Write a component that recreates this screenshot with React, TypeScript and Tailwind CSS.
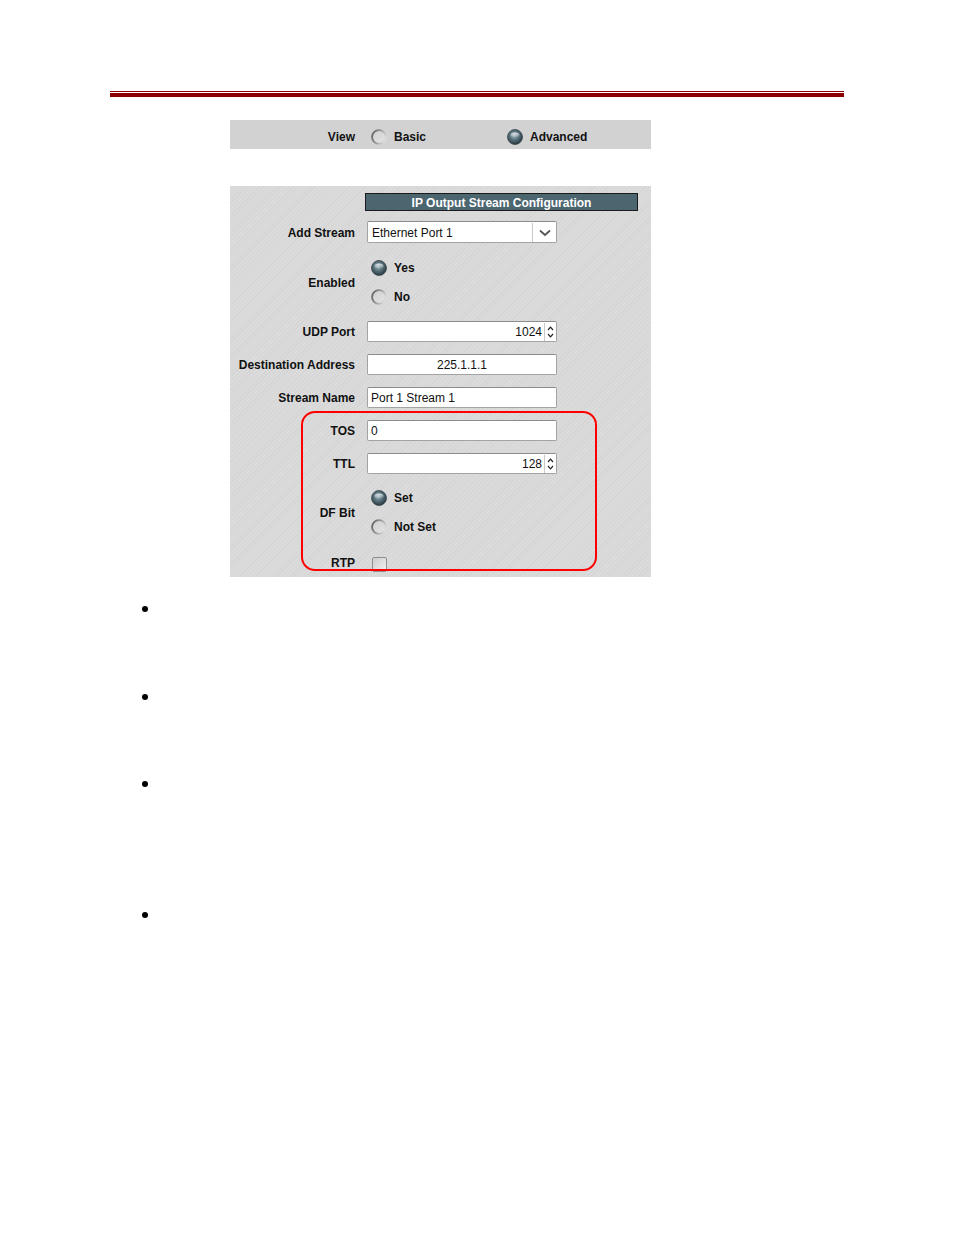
import React from "react";

const font = { fontFamily: '"Liberation Sans", Arial, sans-serif' };

function Radio({ on }: { on: boolean }) {
  if (on) {
    return (
      <svg width="16" height="16" viewBox="0 0 16 16" className="shrink-0">
        <defs>
          <radialGradient id="rOn" cx="45%" cy="40%" r="60%">
            <stop offset="0%" stopColor="#a9bcc3" />
            <stop offset="45%" stopColor="#5d7680" />
            <stop offset="100%" stopColor="#27373d" />
          </radialGradient>
          <linearGradient id="rOnHi" x1="0" y1="0" x2="0" y2="1">
            <stop offset="0%" stopColor="#ffffff" stopOpacity="0.75" />
            <stop offset="100%" stopColor="#ffffff" stopOpacity="0" />
          </linearGradient>
        </defs>
        <circle cx="8" cy="8" r="7.5" fill="url(#rOn)" stroke="#3a4a50" strokeWidth="0.8" />
        <ellipse cx="8" cy="6" rx="4.5" ry="2.6" fill="url(#rOnHi)" />
      </svg>
    );
  }
  return (
    <svg width="16" height="16" viewBox="0 0 16 16" className="shrink-0">
      <defs>
        <linearGradient id="rOffS" x1="0" y1="0.2" x2="1" y2="0.6">
          <stop offset="0%" stopColor="#5e5e5e" />
          <stop offset="50%" stopColor="#9a9a9a" />
          <stop offset="100%" stopColor="#dcdcdc" />
        </linearGradient>
        <linearGradient id="rOffF" x1="0" y1="0" x2="1" y2="1">
          <stop offset="0%" stopColor="#cfcfcf" />
          <stop offset="100%" stopColor="#e4e4e4" />
        </linearGradient>
      </defs>
      <circle cx="8" cy="8" r="6.9" fill="url(#rOffF)" stroke="url(#rOffS)" strokeWidth="1.8" />
    </svg>
  );
}

function Row({
  label,
  h,
  mt,
  children,
}: {
  label: string;
  h: number;
  mt: number;
  children: React.ReactNode;
}) {
  return (
    <div className="flex items-center" style={{ height: h, marginTop: mt }}>
      <div className="w-[125px] pt-[1px] text-right text-[12px] font-bold text-[#111]">{label}</div>
      <div className="ml-[12px] flex h-full items-center">{children}</div>
    </div>
  );
}

function Spinner() {
  return (
    <div className="flex h-full w-[12px] flex-col items-center justify-center border-l border-[#c8c8c8]">
      <svg width="7" height="5" viewBox="0 0 7 5">
        <path d="M1 4 L3.5 1.2 L6 4" fill="none" stroke="#222" strokeWidth="1.2" />
      </svg>
      <svg width="7" height="5" viewBox="0 0 7 5" className="mt-[2px]">
        <path d="M1 1 L3.5 3.8 L6 1" fill="none" stroke="#222" strokeWidth="1.2" />
      </svg>
    </div>
  );
}

const inputCls =
  "flex h-[21px] w-[190px] items-center border border-[#a3a3a3] border-t-[#8c8c8c] bg-white text-[12px] text-[#111] rounded-[2px] pt-[1px]";

export default function App() {
  return (
    <div className="relative h-[1235px] w-[954px] bg-white" style={font}>
      {/* top rule */}
      <div className="pt-[91px]">
        <div className="ml-[110px] h-[1px] w-[734px] bg-[#8b0000]" />
        <div className="ml-[110px] mt-[1px] h-[4px] w-[734px] bg-[#8b0000]" />
      </div>

      {/* view bar */}
      <div className="ml-[230px] mt-[23px] flex h-[29px] w-[421px] items-center bg-[#d2d2d2] pt-[4px]">
        <div className="w-[125px] text-right text-[12px] font-bold text-[#111]">View</div>
        <div className="ml-[16px] flex items-center">
          <div className="flex w-[136px] items-center">
            <Radio on={false} />
            <span className="ml-[7px] text-[12px] font-bold text-[#111]">Basic</span>
          </div>
          <div className="flex items-center">
            <Radio on={true} />
            <span className="ml-[7px] text-[12px] font-bold text-[#111]">Advanced</span>
          </div>
        </div>
      </div>

      {/* config panel */}
      <div className="relative ml-[230px] mt-[37px] h-[391px] w-[421px] bg-[repeating-linear-gradient(135deg,#d5d5d5_0px,#d5d5d5_1px,#dbdbdb_1px,#dbdbdb_3px)] pt-[7px]">
        <div className="ml-[135px] flex h-[18px] w-[273px] items-center justify-center border border-[#1a1a1a] bg-[#4c6670] pt-[2px] text-[12px] font-bold text-white">
          IP Output Stream Configuration
        </div>

        <Row label="Add Stream" h={22} mt={10}>
          <div className={inputCls + " h-[22px] justify-between"}>
            <span className="pl-[4px]">Ethernet Port 1</span>
            <div className="flex h-full w-[24px] items-center justify-center border-l border-[#c8c8c8]">
              <svg width="12" height="8" viewBox="0 0 12 8">
                <path d="M1 1.5 L6 6 L11 1.5" fill="none" stroke="#555" strokeWidth="1.8" />
              </svg>
            </div>
          </div>
        </Row>

        <Row label="Enabled" h={58} mt={10}>
          <div className="flex flex-col">
            <div className="flex h-[29px] items-center pl-[4px]">
              <Radio on={true} />
              <span className="ml-[7px] text-[12px] font-bold text-[#111]">Yes</span>
            </div>
            <div className="flex h-[29px] items-center pl-[4px]">
              <Radio on={false} />
              <span className="ml-[7px] text-[12px] font-bold text-[#111]">No</span>
            </div>
          </div>
        </Row>

        <Row label="UDP Port" h={21} mt={10}>
          <div className={inputCls}>
            <span className="flex-1 pr-[2px] text-right">1024</span>
            <Spinner />
          </div>
        </Row>

        <Row label="Destination Address" h={21} mt={12}>
          <div className={inputCls + " justify-center"}>
            <span>225.1.1.1</span>
          </div>
        </Row>

        <Row label="Stream Name" h={21} mt={12}>
          <div className={inputCls}>
            <span className="pl-[3px]">Port 1 Stream 1</span>
          </div>
        </Row>

        <Row label="TOS" h={21} mt={12}>
          <div className={inputCls}>
            <span className="pl-[3px]">0</span>
          </div>
        </Row>

        <Row label="TTL" h={21} mt={12}>
          <div className={inputCls}>
            <span className="flex-1 pr-[2px] text-right">128</span>
            <Spinner />
          </div>
        </Row>

        <Row label="DF Bit" h={58} mt={9}>
          <div className="flex flex-col">
            <div className="flex h-[29px] items-center pl-[4px]">
              <Radio on={true} />
              <span className="ml-[7px] text-[12px] font-bold text-[#111]">Set</span>
            </div>
            <div className="flex h-[29px] items-center pl-[4px]">
              <Radio on={false} />
              <span className="ml-[7px] text-[12px] font-bold text-[#111]">Not Set</span>
            </div>
          </div>
        </Row>

        <Row label="RTP" h={22} mt={10}>
          <div className="pl-[5px] pt-[4px]">
            <div className="h-[15px] w-[15px] rounded-[2px] border border-[#8f8f8f] bg-[linear-gradient(135deg,#cccccc,#f2f2f2)]" />
          </div>
        </Row>

        {/* red highlight */}
        <div className="pointer-events-none absolute left-[71px] top-[225px] h-[160px] w-[296px] rounded-[14px] border-2 border-[#ff0000]" />
      </div>

      {/* bullets */}
      <div className="ml-[142px] flex flex-col">
        <div className="mt-[29px] h-[6px] w-[6px] rounded-full bg-black" />
        <div className="mt-[82px] h-[6px] w-[6px] rounded-full bg-black" />
        <div className="mt-[81px] h-[6px] w-[6px] rounded-full bg-black" />
        <div className="mt-[125px] h-[6px] w-[6px] rounded-full bg-black" />
      </div>
    </div>
  );
}
